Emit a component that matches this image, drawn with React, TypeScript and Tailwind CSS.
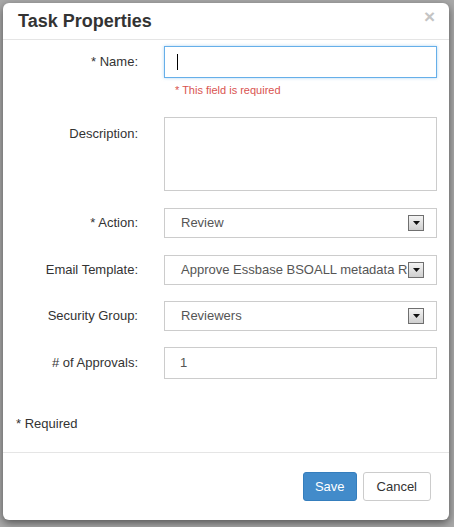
import React from "react";

function Arrow() {
  return (
    <div className="w-[16px] h-[16px] border border-[#6f6f6f] bg-gradient-to-b from-[#f4f4f4] to-[#cfcfcf] flex items-center justify-center shrink-0">
      <svg width="7" height="4" viewBox="0 0 7 4">
        <path d="M0 0 H7 L3.5 4 Z" fill="#111" />
      </svg>
    </div>
  );
}

function Select({ value }: { value: string }) {
  return (
    <div className="w-[273px] h-[30px] border border-[#cccccc] bg-white flex items-center pl-[16px] pr-[12px]">
      <span className="flex-1 whitespace-nowrap text-[13px] text-[#555]">{value}</span>
      <Arrow />
    </div>
  );
}

export default function App() {
  return (
    <div
      className="w-[454px] h-[527px] bg-[#a9a9a9] pt-[3px] pl-[3px]"
      style={{ fontFamily: '"Liberation Sans", Arial, sans-serif' }}
    >
      <div className="w-[446px] h-[517px] bg-white rounded-[6px] shadow-[0_3px_9px_rgba(0,0,0,0.5)] flex flex-col">
        {/* header */}
        <div className="h-[37px] pl-[15px] pr-[14px] flex items-center justify-between border-b border-[#e5e5e5]">
          <h4 className="text-[18px] font-bold text-[#333]">Task Properties</h4>
          <span className="text-[19px] font-bold text-[#c4c4c4] leading-none -mt-[10px]">×</span>
        </div>
        {/* body */}
        <div className="flex-1 pt-[6px] text-[13px] text-[#333]">
          <div className="flex items-center">
            <div className="w-[135px] text-right">* Name:</div>
            <div className="ml-[26px] w-[273px] h-[32px] border border-[#66afe9] shadow-[0_0_3px_rgba(102,175,233,0.5)] flex items-center pl-[12px]">
              <span className="w-[1px] h-[16px] bg-black" />
            </div>
          </div>
          <div className="ml-[172px] mt-[6px] text-[11px] leading-[13px] text-[#d9534f]">* This field is required</div>
          <div className="flex items-start mt-[20px]">
            <div className="w-[135px] text-right pt-[7px]">Description:</div>
            <div className="ml-[26px] w-[273px] h-[74px] border border-[#cccccc]" />
          </div>
          <div className="flex items-center mt-[17px]">
            <div className="w-[135px] text-right">* Action:</div>
            <div className="ml-[26px]">
              <Select value="Review" />
            </div>
          </div>
          <div className="flex items-center mt-[17px]">
            <div className="w-[135px] text-right">Email Template:</div>
            <div className="ml-[26px]">
              <div className="w-[273px] h-[30px] border border-[#cccccc] bg-white flex items-center pl-[16px] pr-[12px]">
                <span className="flex-1 whitespace-nowrap text-[13px] text-[#555]">Approve Essbase BSOALL metadata R</span>
                <Arrow />
              </div>
            </div>
          </div>
          <div className="flex items-center mt-[16px]">
            <div className="w-[135px] text-right">Security Group:</div>
            <div className="ml-[26px]">
              <Select value="Reviewers" />
            </div>
          </div>
          <div className="flex items-center mt-[16px]">
            <div className="w-[135px] text-right"># of Approvals:</div>
            <div className="ml-[26px] w-[273px] h-[32px] border border-[#cccccc] flex items-center pl-[15px] text-[#555]">1</div>
          </div>
          <div className="ml-[13px] mt-[35px]">* Required</div>
        </div>
        {/* footer */}
        <div className="h-[68px] border-t border-[#e5e5e5] flex items-center justify-end pr-[18px] gap-[6px] text-[13px]">
          <button className="h-[29px] px-[11px] rounded-[3px] bg-[#428bca] border border-[#357ebd] text-white">Save</button>
          <button className="h-[29px] px-[13px] rounded-[3px] bg-white border border-[#cccccc] text-[#333]">Cancel</button>
        </div>
      </div>
    </div>
  );
}
